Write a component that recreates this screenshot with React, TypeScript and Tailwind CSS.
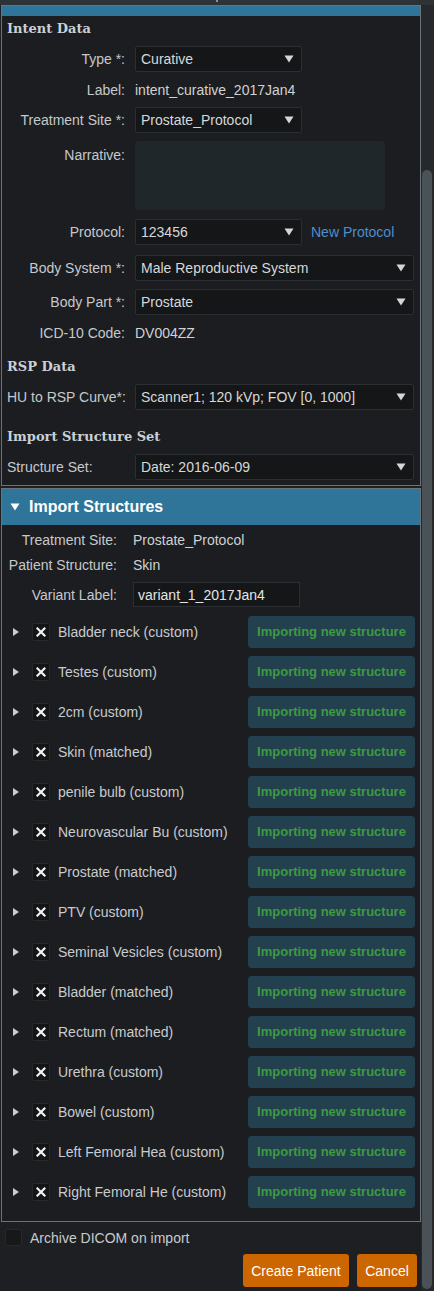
import React from "react";

const structures = [
  "Bladder neck (custom)",
  "Testes (custom)",
  "2cm (custom)",
  "Skin (matched)",
  "penile bulb (custom)",
  "Neurovascular Bu (custom)",
  "Prostate (matched)",
  "PTV (custom)",
  "Seminal Vesicles (custom)",
  "Bladder (matched)",
  "Rectum (matched)",
  "Urethra (custom)",
  "Bowel (custom)",
  "Left Femoral Hea (custom)",
  "Right Femoral He (custom)",
];

const Caret = () => (
  <svg width="10" height="8" viewBox="0 0 10 8" className="shrink-0">
    <path d="M0.5 0.5 H9.5 L5 7.5 Z" fill="#d4d6d8" />
  </svg>
);

const Select = ({ value, wide }: { value: string; wide?: boolean }) => (
  <div
    className={`flex h-[26px] items-center justify-between rounded-[2px] border border-[#2b2e32] bg-[#151618] pl-[5px] pr-[7px] text-[#d6d8da] ${
      wide ? "w-[279px]" : "w-[167px]"
    }`}
  >
    <span className="whitespace-nowrap">{value}</span>
    <Caret />
  </div>
);

const Row = ({
  label,
  children,
  left,
  className = "",
}: {
  label: string;
  children: React.ReactNode;
  left?: boolean;
  className?: string;
}) => (
  <div className={`flex items-center ${className}`}>
    <div
      className={`w-[118px] shrink-0 whitespace-nowrap text-[#c5c9cc] ${
        left ? "text-left" : "text-right"
      }`}
    >
      {label}
    </div>
    <div className="ml-[10px]">{children}</div>
  </div>
);

const Heading = ({ children, className = "" }: { children: React.ReactNode; className?: string }) => (
  <div
    className={`flex h-[26px] items-center font-bold text-[13px] text-[#c9d0d6] ${className}`}
    style={{ fontFamily: '"DejaVu Serif", serif' }}
  >
    {children}
  </div>
);

export default function App() {
  return (
    <div
      className="flex h-[1291px] w-[434px] flex-col overflow-hidden bg-[#1e1f22] text-[14px] leading-[16px]"
      style={{ fontFamily: '"Liberation Sans", Arial, sans-serif' }}
    >
      {/* top strip */}
      <div className="relative h-[5px] w-full shrink-0 bg-[#2d3237]">
        <div className="absolute left-[216px] top-0 h-[2px] w-[2px] bg-[#8a9096]" />
      </div>

      <div className="flex flex-1">
        {/* main column */}
        <div className="w-[421px] shrink-0">
          {/* Intent panel */}
          <div className="ml-[1px] w-[420px] border border-[#69737a] bg-[#1c1d20]">
            <div className="h-[10px] bg-[#2e7599]" />
            <div className="flex flex-col pl-[5px] pb-[5px]">
              <Heading>Intent Data</Heading>
              <Row label="Type *:" className="mt-[4px]">
                <Select value="Curative" />
              </Row>
              <Row label="Label:" className="mt-[4px] h-[27px]">
                <span className="text-[#cfd2d4]">intent_curative_2017Jan4</span>
              </Row>
              <Row label="Treatment Site *:" className="mt-[4px]">
                <Select value="Prostate_Protocol" />
              </Row>
              <div className="mt-[8px] flex items-start">
                <div className="w-[118px] shrink-0 pt-[6px] text-right text-[#c5c9cc]">Narrative:</div>
                <div className="ml-[10px] h-[69px] w-[250px] rounded-[3px] bg-[#1f272a]" />
              </div>
              <Row label="Protocol:" className="mt-[9px]">
                <div className="flex items-center">
                  <Select value="123456" />
                  <span className="ml-[9px] whitespace-nowrap text-[#4d8fcf]">New Protocol</span>
                </div>
              </Row>
              <Row label="Body System *:" className="mt-[10px]">
                <Select value="Male Reproductive System" wide />
              </Row>
              <Row label="Body Part *:" className="mt-[8px]">
                <Select value="Prostate" wide />
              </Row>
              <Row label="ICD-10 Code:" className="mt-[4px] h-[28px]">
                <span className="text-[#cfd2d4]">DV004ZZ</span>
              </Row>
              <Heading className="mt-[7px]">RSP Data</Heading>
              <Row label="HU to RSP Curve*:" left className="mt-[4px]">
                <Select value="Scanner1; 120 kVp; FOV [0, 1000]" wide />
              </Row>
              <Heading className="mt-[14px]">Import Structure Set</Heading>
              <Row label="Structure Set:" left className="mt-[4px]">
                <Select value="Date: 2016-06-09" wide />
              </Row>
            </div>
          </div>

          {/* Import Structures panel */}
          <div className="ml-[1px] mt-[2px] w-[420px] border border-[#69737a] bg-[#1c1d20]">
            <div className="flex h-[36px] items-center bg-[#2e7599] pl-[8px] text-[16px] font-bold text-white">
              <svg width="10" height="8" viewBox="0 0 10 8" className="mr-[9px]">
                <path d="M0.5 0.5 H9.5 L5 7.5 Z" fill="#ffffff" />
              </svg>
              Import Structures
            </div>
            <div className="flex flex-col pl-[5px] pr-[5px] pb-[13px] pt-[3px]">
              <div className="flex h-[24px] items-center">
                <div className="w-[110px] text-right text-[#c5c9cc]">Treatment Site:</div>
                <div className="ml-[16px] text-[#cfd2d4]">Prostate_Protocol</div>
              </div>
              <div className="flex h-[25px] items-center">
                <div className="w-[110px] whitespace-nowrap text-right text-[#c5c9cc]">Patient Structure:</div>
                <div className="ml-[16px] text-[#cfd2d4]">Skin</div>
              </div>
              <div className="mt-[5px] flex h-[25px] items-center">
                <div className="w-[110px] text-right text-[#c5c9cc]">Variant Label:</div>
                <div className="ml-[16px] flex h-[25px] w-[167px] items-center border border-[#2b2e32] bg-[#151618] pl-[4px] text-[#e2e4e6]">
                  variant_1_2017Jan4
                </div>
              </div>
              <div className="mt-[9px] flex flex-col gap-[8px]">
                {structures.map((s) => (
                  <div key={s} className="flex h-[32px] items-center">
                    <svg width="6" height="8" viewBox="0 0 6 8" className="ml-[6px] shrink-0">
                      <path d="M0 0 L6 4 L0 8 Z" fill="#c9ccd0" />
                    </svg>
                    <div className="ml-[13px] flex h-[18px] w-[18px] shrink-0 items-center justify-center rounded-[2px] border border-[#26282b] bg-[#141517]">
                      <svg width="10" height="10" viewBox="0 0 10 10">
                        <path d="M1.5 1.5 L8.5 8.5 M8.5 1.5 L1.5 8.5" stroke="#f2f2f2" strokeWidth="2.2" strokeLinecap="square" />
                      </svg>
                    </div>
                    <span className="ml-[8px] whitespace-nowrap text-[#c8cbcf]">{s}</span>
                    <div className="ml-auto flex h-[32px] w-[167px] items-center justify-center rounded-[4px] bg-[#23404f] text-[13px] font-bold text-[#3d9b40]">
                      Importing new structure
                    </div>
                  </div>
                ))}
              </div>
            </div>
          </div>

          {/* footer */}
          <div className="mt-[7px] flex h-[17px] items-center pl-[5px]">
            <div className="h-[17px] w-[17px] rounded-[2px] border border-[#26282b] bg-[#17181a]" />
            <span className="ml-[8px] text-[#c8cbcf]">Archive DICOM on import</span>
          </div>
          <div className="mt-[8px] flex justify-end gap-[8px] pr-[4px]">
            <button className="h-[33px] w-[106px] rounded-[3px] bg-[#cc6600] text-[14px] text-white">
              Create Patient
            </button>
            <button className="h-[33px] w-[60px] rounded-[3px] bg-[#cc6600] text-[14px] text-white">
              Cancel
            </button>
          </div>
        </div>

        {/* scrollbar */}
        <div className="flex flex-1 flex-col bg-[#25282c] pl-[1px] pr-[2px]">
          <div className="mt-[165px] mb-[2px] flex-1 rounded-full bg-[#4b5257]" />
        </div>
      </div>
    </div>
  );
}
